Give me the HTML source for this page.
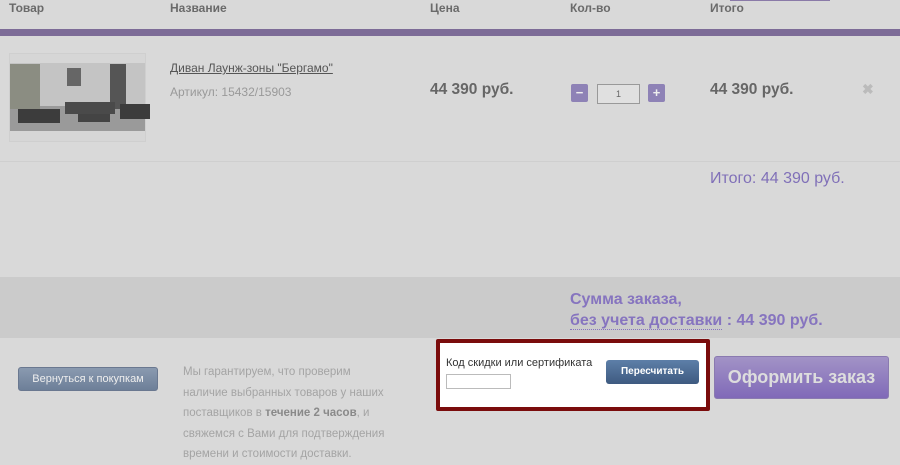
<!DOCTYPE html>
<html><head><meta charset="utf-8"><style>
*{margin:0;padding:0;box-sizing:border-box}
body{width:900px;height:449px;background:#d9d9d9;font-family:"Liberation Sans",sans-serif;position:relative;overflow:hidden;color:#666}
.a{position:absolute;white-space:nowrap}
.h{font-size:12px;font-weight:bold;color:#6a6a6a;top:1px}
.b{font-weight:bold}
</style></head><body>
<div class="a h" style="left:9px">Товар</div>
<div class="a h" style="left:170px">Название</div>
<div class="a h" style="left:430px">Цена</div>
<div class="a h" style="left:570px">Кол-во</div>
<div class="a h" style="left:710px">Итого</div>
<div class="a" style="left:730px;top:0;width:100px;height:1px;background:#8a7aa8"></div>
<div class="a" style="left:0;top:29px;width:900px;height:7px;background:#7d6c97"></div>

<div class="a" style="left:9px;top:53px;width:137px;height:89px;border:1px solid #cfcfcf;background:#d6d6d6">
 <div style="position:absolute;left:0;top:9px;width:135px;height:68px;background:#c4c4c4"></div>
 <div style="position:absolute;left:0;top:52px;width:135px;height:25px;background:#9a9a9a"></div>
 <div style="position:absolute;left:0;top:10px;width:30px;height:45px;background:#8b8d82"></div>
 <div style="position:absolute;left:57px;top:14px;width:14px;height:18px;background:#666"></div>
 <div style="position:absolute;left:100px;top:10px;width:16px;height:45px;background:#555"></div>
 <div style="position:absolute;left:8px;top:55px;width:42px;height:14px;background:#3c3c3c"></div>
 <div style="position:absolute;left:55px;top:48px;width:50px;height:12px;background:#4a4a4a"></div>
 <div style="position:absolute;left:68px;top:60px;width:32px;height:8px;background:#444"></div>
 <div style="position:absolute;left:110px;top:50px;width:30px;height:15px;background:#3c3c3c"></div>
</div>
<div class="a" style="left:170px;top:61px;font-size:12px;color:#555;text-decoration:underline">Диван Лаунж-зоны "Бергамо"</div>
<div class="a" style="left:170px;top:85px;font-size:12px;color:#999">Артикул: 15432/15903</div>
<div class="a b" style="left:430px;top:81px;font-size:15.5px;color:#666">44 390 руб.</div>
<div class="a" style="left:571px;top:84px;width:17px;height:18px;background:#8e82b6;border-radius:2px;color:#eee;font-size:13px;text-align:center;line-height:17px;font-weight:bold">−</div>
<div class="a" style="left:597px;top:84px;width:43px;height:20px;border:1px solid #999;background:#e0e0e0;font-size:9px;text-align:center;line-height:19px;color:#666">1</div>
<div class="a" style="left:648px;top:84px;width:17px;height:18px;background:#8e82b6;border-radius:2px;color:#eee;font-size:13px;text-align:center;line-height:17px;font-weight:bold">+</div>
<div class="a b" style="left:710px;top:81px;font-size:15.5px;color:#666">44 390 руб.</div>
<div class="a b" style="left:862px;top:81px;font-size:14px;color:#bbb">✖</div>
<div class="a" style="left:0;top:161px;width:900px;height:1px;background:#cfcfcf"></div>
<div class="a" style="left:710px;top:170px;font-size:16px;color:#8070b8">Итого: 44 390 руб.</div>

<div class="a" style="left:0;top:277px;width:900px;height:61px;background:#cbcbcb"></div>
<div class="a b" style="left:570px;top:289px;font-size:16px;color:#8674bf;line-height:21px">Сумма заказа,<br><span style="border-bottom:1px dotted #8674bf">без учета доставки</span> : 44 390 руб.</div>

<div class="a" style="left:18px;top:367px;width:140px;height:24px;background:linear-gradient(#8a9ab0,#6d7f98);border:1px solid #6a7890;border-radius:3px;color:#eee;font-size:11px;text-align:center;line-height:22px">Вернуться к покупкам</div>
<div class="a" style="left:183px;top:362px;font-size:11.5px;line-height:20.5px;color:#a4a4a4">Мы гарантируем, что проверим<br>наличие выбранных товаров у наших<br>поставщиков в <b style="color:#8a8a8a">течение 2 часов</b>, и<br>свяжемся с Вами для подтверждения<br>времени и стоимости доставки.</div>

<div class="a" style="left:436px;top:339px;width:274px;height:72px;border:4px solid #7a0c0c;background:#fff;border-radius:2px"></div>
<div class="a" style="left:446px;top:357px;font-size:11px;color:#333">Код скидки или сертификата</div>
<div class="a" style="left:446px;top:374px;width:65px;height:15px;border:1px solid #bbb;background:#fff"></div>
<div class="a" style="left:606px;top:360px;width:93px;height:24px;background:linear-gradient(#5d7fa8,#3e5a80);border-radius:3px;color:#fff;font-size:10px;font-weight:bold;text-align:center;line-height:24px">Пересчитать</div>
<div class="a" style="left:714px;top:356px;width:175px;height:43px;background:linear-gradient(#a293c6,#8069b8);border:1px solid #8a7ab0;border-radius:3px;color:#ddd;font-size:18px;font-weight:bold;text-align:center;line-height:41px">Оформить заказ</div>
</body></html>
